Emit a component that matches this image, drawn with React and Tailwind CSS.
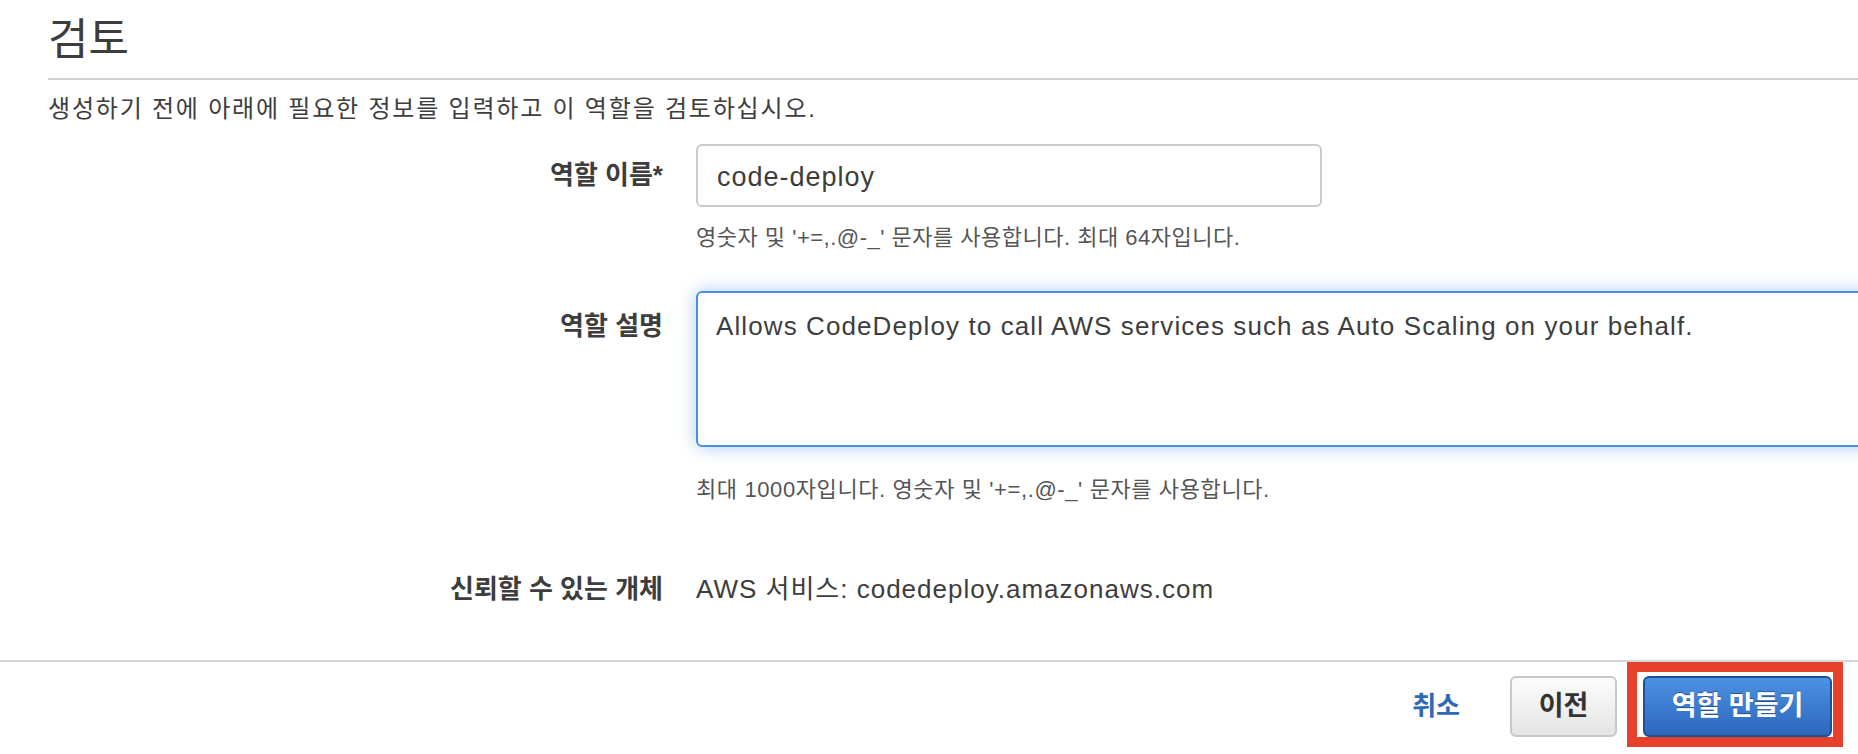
import React from "react";

function App() {
  return (
    <div className="w-full h-[754px] overflow-hidden bg-white text-[#3d3d3d] font-['Liberation_Sans','Noto_Sans_CJK_KR',sans-serif]">
      {/* header */}
      <div className="pl-[48px] pt-[18px]">
        <h1 className="text-[44px] leading-none font-normal">검토</h1>
        <div className="mt-[16px] h-[2px] bg-[#cfcfcf]" />
        <p className="mt-[17px] text-[24px] leading-none tracking-[1.8px]">
          생성하기 전에 아래에 필요한 정보를 입력하고 이 역할을 검토하십시오.
        </p>
      </div>

      {/* role name */}
      <div className="flex mt-[23px]">
        <div className="w-[663px] shrink-0 h-[63px] flex items-center justify-end text-[26px] font-bold">
          역할 이름*
        </div>
        <div className="ml-[33px] shrink-0">
          <input
            readOnly
            value="code-deploy"
            className="block w-[626px] h-[63px] border-2 border-[#cbcbcb] rounded-[6px] px-[19px] pt-[4px] text-[27px] tracking-[1px] text-[#3d3d3d] outline-none"
          />
          <p className="mt-[20px] text-[22px] leading-none tracking-[0.5px] text-[#555]">
            영숫자 및 '+=,.@-_' 문자를 사용합니다. 최대 64자입니다.
          </p>
        </div>
      </div>

      {/* role description */}
      <div className="flex mt-[42px]">
        <div className="w-[663px] shrink-0 pt-[17px] text-right text-[26px] leading-[36px] font-bold">
          역할 설명
        </div>
        <div className="ml-[33px] shrink-0">
          <textarea
            readOnly
            defaultValue="Allows CodeDeploy to call AWS services such as Auto Scaling on your behalf."
            className="block w-[1250px] h-[156px] border-2 border-[#4a8fe0] rounded-[6px] pt-[15px] px-[18px] text-[26px] leading-[36px] tracking-[1.1px] text-[#3d3d3d] resize-none outline-none shadow-[0_0_18px_rgba(74,143,224,0.45)]"
          />
          <p className="mt-[32px] text-[22px] leading-none tracking-[0.6px] text-[#555]">
            최대 1000자입니다. 영숫자 및 '+=,.@-_' 문자를 사용합니다.
          </p>
        </div>
      </div>

      {/* trusted entity */}
      <div className="flex items-center mt-[70px] h-[36px]">
        <div className="w-[663px] shrink-0 text-right text-[26px] font-bold">신뢰할 수 있는 개체</div>
        <div className="ml-[33px] text-[26px] tracking-[1px]">AWS 서비스: codedeploy.amazonaws.com</div>
      </div>

      {/* footer */}
      <div className="mt-[53px] border-t-2 border-[#d6d6d6]">
        <div className="flex justify-end items-center pt-[14px] pr-[26px]">
          <span className="mr-[50px] text-[26px] font-bold text-[#2d6ab5]">취소</span>
          <button className="w-[107px] h-[61px] flex items-center justify-center border-2 border-[#c8c8c8] rounded-[6px] bg-linear-to-b from-[#fcfcfc] to-[#e4e4e4] text-[27px] font-bold text-[#333]">
            이전
          </button>
          <div className="relative ml-[26px]">
            <button className="w-[189px] h-[61px] flex items-center justify-center border-2 border-[#1f4f98] rounded-[6px] bg-linear-to-b from-[#4d92e4] to-[#2c67bb] text-[27px] font-bold text-white [text-shadow:0_-1px_0_rgba(0,0,0,0.35)]">
              역할 만들기
            </button>
            <span className="absolute left-[-16px] top-[-14px] right-[-11px] bottom-[-10px] border-[10px] border-[#e8412b]" />
          </div>
        </div>
      </div>
    </div>
  );
}

export default App;
